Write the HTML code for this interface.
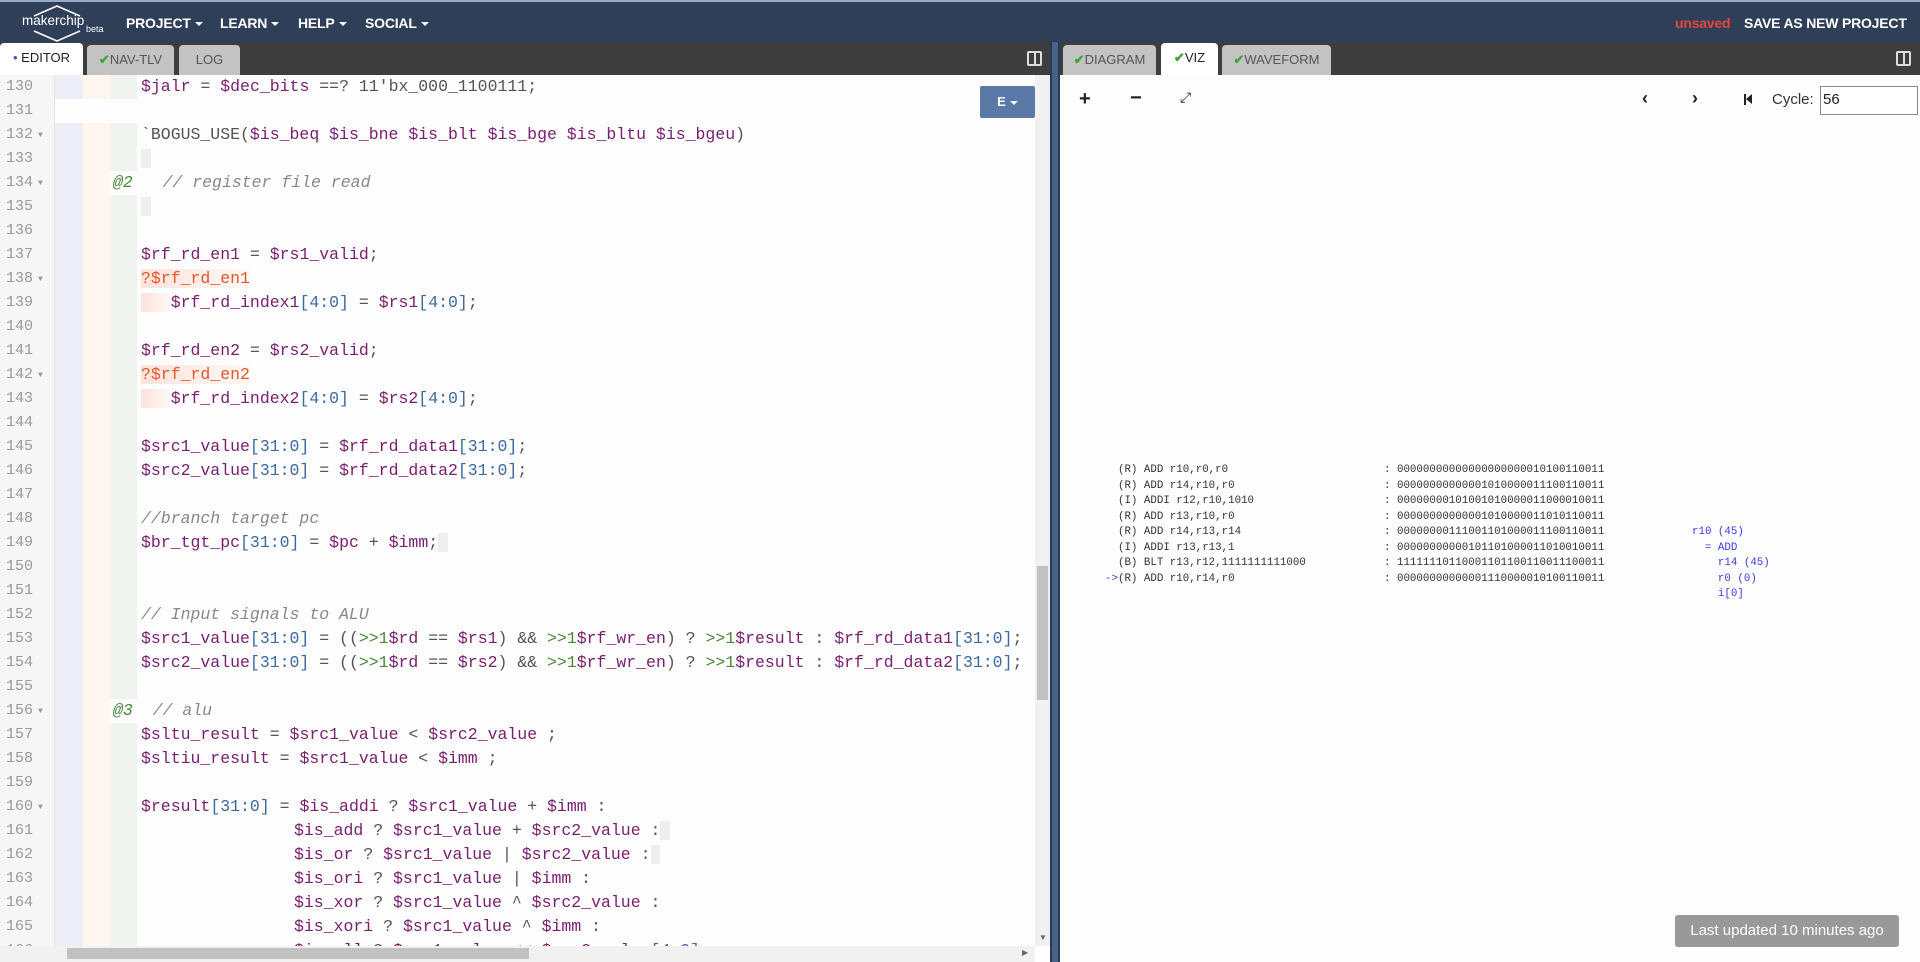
<!DOCTYPE html>
<html><head><meta charset="utf-8"><style>
*{margin:0;padding:0;box-sizing:border-box}
body{width:1920px;height:962px;overflow:hidden;background:#fff;font-family:"Liberation Sans",sans-serif;position:relative}
.hdr{position:absolute;left:0;top:0;width:1920px;height:42px;background:#2f3f58;border-top:2px solid #9aa9c4}
.hdr .m{position:absolute;top:13px;color:#fff;font-weight:bold;font-size:14px;letter-spacing:-0.2px}
.car{display:inline-block;border-left:4px solid transparent;border-right:4px solid transparent;border-top:4px solid #fff;vertical-align:middle;margin-left:4px}
.tb{position:absolute;top:42px;height:33px;background:#3d3d3d}
.tab{position:absolute;top:45px;height:30px;background:#c3c3c3;border-radius:4px 4px 0 0;font-size:13px;color:#555;line-height:30px;text-align:center}
.tab.a{background:#fff;color:#222;top:43px;height:32px}
.ck{color:#3aa832;font-weight:bold}
.ed{position:absolute;left:0;top:75px;width:1035px;height:871px;background:#fdfdfd;overflow:hidden}
.gut{position:absolute;left:0;top:0;width:55px;height:871px;background:#f6f6f6;border-right:1px solid #e4e4e4}
.ln{position:absolute;left:0;width:1035px;height:24px;font-family:"Liberation Mono",monospace;font-size:16.5px;line-height:24px;white-space:pre;color:#555}
.ln .n{position:absolute;left:6px;color:#999;font-size:15px}
.ln .f{position:absolute;left:38px;color:#999;font-size:8px}
.s1{position:absolute;left:55px;width:28px;height:24px;background:#eeeef9}
.s2{position:absolute;left:83px;width:27px;height:24px;background:#fdf7f0}
.s3{position:absolute;left:110px;width:27px;height:24px;background:#eff5ee}
.t{position:absolute;top:0}
.v{color:#7a1e6f}.b{color:#3b6aa0}.c{color:#888;font-style:italic}.g{color:#4a8a3a}.o{color:#e0572b}.at{color:#4a8a3a;font-style:italic}
.q{background:linear-gradient(90deg,#fde3db,#fff8f5)}
.vz{position:absolute;font-family:"Liberation Mono",monospace;font-size:10.8px;white-space:pre;color:#333;line-height:15.5px}
.bl{color:#3a3ae6}
</style></head><body>
<div class="hdr">
 <svg style="position:absolute;left:22px;top:2px" width="70" height="38" viewBox="0 0 70 38"><path d="M12 12 L35 2 L58 12 M12 27 L35 37 L58 27" fill="none" stroke="#fff" stroke-width="1.5"/></svg>
 <div style="position:absolute;left:22px;top:11px;color:#fff;font-size:13.5px">makerchip</div>
 <div style="position:absolute;left:86px;top:22px;color:#fff;font-size:9px">beta</div>
 <div class="m" style="left:126px">PROJECT<span class="car"></span></div>
 <div class="m" style="left:220px">LEARN<span class="car"></span></div>
 <div class="m" style="left:298px">HELP<span class="car"></span></div>
 <div class="m" style="left:365px">SOCIAL<span class="car"></span></div>
 <div class="m" style="left:1675px;color:#e8463b;font-weight:bold">unsaved</div>
 <div class="m" style="left:1744px">SAVE AS NEW PROJECT</div>
</div>
<div class="tb" style="left:0;width:1050px"></div>
<div class="tb" style="left:1060px;width:860px"></div>
<div class="tab a" style="left:0;width:83px"><span style="color:#3b4fd8">•</span> EDITOR</div>
<div class="tab" style="left:87px;width:87px"><span class="ck">✔</span>NAV-TLV</div>
<div class="tab" style="left:179px;width:61px">LOG</div>
<div class="tab" style="left:1063px;width:93px"><span class="ck">✔</span>DIAGRAM</div>
<div class="tab a" style="left:1161px;width:57px"><span class="ck">✔</span>VIZ</div>
<div class="tab" style="left:1222px;width:109px"><span class="ck">✔</span>WAVEFORM</div>
<div style="position:absolute;left:1027px;top:51px;width:15px;height:15px;border:2px solid #ddd;border-radius:2px"><div style="position:absolute;left:4.5px;top:0;width:2px;height:11px;background:#ddd"></div></div>
<div style="position:absolute;left:1896px;top:51px;width:15px;height:15px;border:2px solid #ddd;border-radius:2px"><div style="position:absolute;left:4.5px;top:0;width:2px;height:11px;background:#ddd"></div></div>

<div class="ed" id="ed"></div>
<div style="position:absolute;left:1035px;top:75px;width:15px;height:871px;background:#f1f1f1"><div style="position:absolute;left:2px;top:491px;width:11px;height:134px;background:#c1c1c1"></div><div style="position:absolute;left:4px;top:858px;font-size:8px;color:#666">▼</div></div>
<div style="position:absolute;left:0;top:946px;width:1035px;height:16px;background:#f1f1f1"><div style="position:absolute;left:67px;top:2px;width:462px;height:11px;background:#c1c1c1"></div><div style="position:absolute;left:1022px;top:2px;font-size:8px;color:#666">▶</div></div>
<div style="position:absolute;left:980px;top:86px;width:55px;height:32px;background:#5b79a6;color:#fff;font-size:13px;font-weight:bold;line-height:32px;text-align:center;border-radius:2px">E<span class="car"></span></div>
<div style="position:absolute;left:1050px;top:42px;width:10px;height:920px;background:#4a6186;border-left:2px solid #2a3a55;border-right:2px solid #2a3a55"></div>

<div style="position:absolute;left:1060px;top:75px;width:860px;height:887px;background:#fdfdfd"></div>
<div style="position:absolute;left:1079px;top:88px;font-size:20px;font-weight:bold;color:#222">+</div>
<div style="position:absolute;left:1130px;top:87px;font-size:20px;font-weight:bold;color:#222">−</div>
<div style="position:absolute;left:1180px;top:89px;font-size:14px;color:#222">⤢</div>
<div style="position:absolute;left:1642px;top:88px;font-size:18px;font-weight:bold;color:#222">‹</div>
<div style="position:absolute;left:1692px;top:88px;font-size:18px;font-weight:bold;color:#222">›</div>
<div style="position:absolute;left:1744px;top:94px;width:2px;height:11px;background:#222"></div>
<div style="position:absolute;left:1746px;top:94px;border-top:5.5px solid transparent;border-bottom:5.5px solid transparent;border-right:6px solid #222"></div>
<div style="position:absolute;left:1772px;top:91px;font-size:15px;color:#333">Cycle:</div>
<div style="position:absolute;left:1820px;top:86px;width:98px;height:29px;border:1px solid #888;background:#fff;font-size:15px;padding:4px 2px;color:#222">56</div>

<div class="vz" style="left:1105px;top:463px">  (R) ADD r10,r0,r0
  (R) ADD r14,r10,r0
  (I) ADDI r12,r10,1010
  (R) ADD r13,r10,r0
  (R) ADD r14,r13,r14
  (I) ADDI r13,r13,1
  (B) BLT r13,r12,1111111111000
<span class="bl">-></span>(R) ADD r10,r14,r0</div>
<div class="vz" style="left:1384px;top:463px">: 00000000000000000000010100110011
: 00000000000001010000011100110011
: 00000000101001010000011000010011
: 00000000000001010000011010110011
: 00000000111001101000011100110011
: 00000000000101101000011010010011
: 11111110110001101100110011100011
: 00000000000001110000010100110011</div>
<div class="vz bl" style="left:1692px;top:525px">r10 (45)
  = ADD
    r14 (45)
    r0 (0)
    i[0]</div>
<div style="position:absolute;left:1675px;top:915px;width:224px;height:32px;background:#999;border-radius:3px;color:#fff;font-size:15px;line-height:32px;text-align:center">Last updated 10 minutes ago</div>

<script>
const L=[
[141,'<span class="v">$jalr</span> = <span class="v">$dec_bits</span> ==? 11\'bx_000_1100111;'],
[0,''],
[141,'`BOGUS_USE(<span class="v">$is_beq</span> <span class="v">$is_bne</span> <span class="v">$is_blt</span> <span class="v">$is_bge</span> <span class="v">$is_bltu</span> <span class="v">$is_bgeu</span>)',1],
[141,'<span style="background:#eee"> </span>'],
[113,'<span class="at">@2</span>   <span class="c">// register file read</span>',1],
[141,'<span style="background:#eee"> </span>'],
[141,''],
[141,'<span class="v">$rf_rd_en1</span> = <span class="v">$rs1_valid</span>;'],
[141,'<span class="o q">?$rf_rd_en1</span>',1],
[141,'<span class="q">   </span><span class="v">$rf_rd_index1</span><span class="b">[4:0]</span> = <span class="v">$rs1</span><span class="b">[4:0]</span>;'],
[141,''],
[141,'<span class="v">$rf_rd_en2</span> = <span class="v">$rs2_valid</span>;'],
[141,'<span class="o q">?$rf_rd_en2</span>',1],
[141,'<span class="q">   </span><span class="v">$rf_rd_index2</span><span class="b">[4:0]</span> = <span class="v">$rs2</span><span class="b">[4:0]</span>;'],
[141,''],
[141,'<span class="v">$src1_value</span><span class="b">[31:0]</span> = <span class="v">$rf_rd_data1</span><span class="b">[31:0]</span>;'],
[141,'<span class="v">$src2_value</span><span class="b">[31:0]</span> = <span class="v">$rf_rd_data2</span><span class="b">[31:0]</span>;'],
[141,''],
[141,'<span class="c">//branch target pc</span>'],
[141,'<span class="v">$br_tgt_pc</span><span class="b">[31:0]</span> = <span class="v">$pc</span> + <span class="v">$imm</span>;<span style="background:#eee"> </span>'],
[141,''],[141,''],
[141,'<span class="c">// Input signals to ALU</span>'],
[141,'<span class="v">$src1_value</span><span class="b">[31:0]</span> = ((<span class="g">>>1</span><span class="v">$rd</span> == <span class="v">$rs1</span>) &amp;&amp; <span class="g">>>1</span><span class="v">$rf_wr_en</span>) ? <span class="g">>>1</span><span class="v">$result</span> : <span class="v">$rf_rd_data1</span><span class="b">[31:0]</span>;'],
[141,'<span class="v">$src2_value</span><span class="b">[31:0]</span> = ((<span class="g">>>1</span><span class="v">$rd</span> == <span class="v">$rs2</span>) &amp;&amp; <span class="g">>>1</span><span class="v">$rf_wr_en</span>) ? <span class="g">>>1</span><span class="v">$result</span> : <span class="v">$rf_rd_data2</span><span class="b">[31:0]</span>;'],
[141,''],
[113,'<span class="at">@3</span>  <span class="c">// alu</span>',1],
[141,'<span class="v">$sltu_result</span> = <span class="v">$src1_value</span> &lt; <span class="v">$src2_value</span> ;'],
[141,'<span class="v">$sltiu_result</span> = <span class="v">$src1_value</span> &lt; <span class="v">$imm</span> ;'],
[141,''],
[141,'<span class="v">$result</span><span class="b">[31:0]</span> = <span class="v">$is_addi</span> ? <span class="v">$src1_value</span> + <span class="v">$imm</span> :',1],
[294,'<span class="v">$is_add</span> ? <span class="v">$src1_value</span> + <span class="v">$src2_value</span> :<span style="background:#eee"> </span>'],
[294,'<span class="v">$is_or</span> ? <span class="v">$src1_value</span> | <span class="v">$src2_value</span> :<span style="background:#eee"> </span>'],
[294,'<span class="v">$is_ori</span> ? <span class="v">$src1_value</span> | <span class="v">$imm</span> :'],
[294,'<span class="v">$is_xor</span> ? <span class="v">$src1_value</span> ^ <span class="v">$src2_value</span> :'],
[294,'<span class="v">$is_xori</span> ? <span class="v">$src1_value</span> ^ <span class="v">$imm</span> :'],
[294,'<span class="v">$is_sll</span> ? <span class="v">$src1_value</span> &lt;&lt; <span class="v">$src2_value</span><span class="b">[4:0]</span> :']
];
let h='';
L.forEach((l,i)=>{const n=130+i;const top=i*24;
let s='';
if(n!==131){s+='<div class="s1"></div><div class="s2"></div>';if(l[0]!==113)s+='<div class="s3"></div>';}
h+=`<div class="ln" style="top:${top}px">${s}<span class="n">${n}</span>${l[2]?'<span class="f" style="top:1px">▼</span>':''}<span class="t" style="left:${l[0]}px">${l[1]}</span></div>`;});
document.getElementById('ed').innerHTML='<div class="gut"></div>'+h;
</script>
</body></html>
